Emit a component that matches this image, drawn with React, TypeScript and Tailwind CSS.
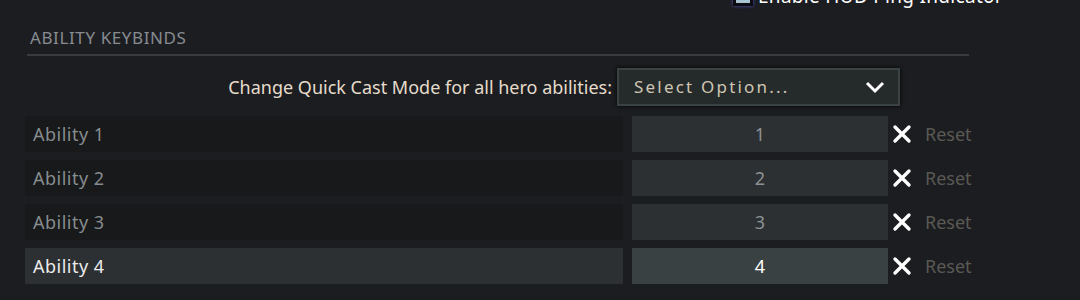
import React from 'react';

const abilities = [
  { name: 'Ability 1', key: '1' },
  { name: 'Ability 2', key: '2' },
  { name: 'Ability 3', key: '3' },
  { name: 'Ability 4', key: '4', active: true },
];

const XIcon = () => (
  <svg width="20" height="20" viewBox="0 0 20 20" className="shrink-0">
    <path d="M3 3 L17 17 M17 3 L3 17" stroke="#ffffff" strokeWidth="3.4" strokeLinecap="round" />
  </svg>
);

export default function App() {
  return (
    <div className="w-[1080px] h-[300px] overflow-hidden bg-[#1c1d21] font-['Noto_Sans',sans-serif]">
      {/* clipped checkbox row above */}
      <div className="flex items-center h-[24px] -mt-[16px] pl-[733px] gap-[5px]">
        <div className="w-[20px] h-[20px] border-[3px] border-[#0b0b10] bg-[#a9c4d2] shadow-[0_0_3px_#5050c0]" />
        <span className="text-[19px] text-white leading-none tracking-[0.3px]">Enable HUD Ping Indicator</span>
      </div>

      <div className="ml-[25px] w-[1000px]">
        <div className="ml-[2px] w-[942px] pt-[20px] pb-[6px] border-b-2 border-[#3a3b3f]">
          <div className="pl-[3px] text-[17px] leading-[20px] tracking-[0.6px] text-[#878c91] uppercase">Ability Keybinds</div>
        </div>

        <div className="flex items-center justify-end w-[875px] mt-[12px] h-[38px]">
          <span className="text-[18px] text-[#e6dccb] mr-[5px]">Change Quick Cast Mode for all hero abilities:</span>
          <div className="flex items-center justify-between w-[283px] h-[38px] bg-[#252a2a] border-2 border-[#3a4242] shadow-[0_0_4px_#000] pl-[15px] pr-[12px]">
            <span className="text-[17px] tracking-[2.2px] text-[#cfc6b5]">Select Option...</span>
            <svg width="22" height="14" viewBox="0 0 22 14">
              <path d="M3 3 L11 11 L19 3" stroke="#ffffff" strokeWidth="3" fill="none" strokeLinejoin="miter" />
            </svg>
          </div>
        </div>

        <div className="flex flex-col gap-[8px] mt-[10px]">
          {abilities.map((a) => (
            <div key={a.name} className="flex items-center h-[36px]">
              <div
                className={`w-[598px] shrink-0 h-full flex items-center pl-[8px] text-[18px] tracking-[0.5px] ${
                  a.active ? 'bg-[#2c3032] text-[#ececec]' : 'bg-[#17191a] text-[#878c8f]'
                }`}
              >
                {a.name}
              </div>
              <div
                className={`ml-[9px] w-[256px] shrink-0 h-full flex items-center justify-center text-[18px] ${
                  a.active ? 'bg-[#3a4142] text-white' : 'bg-[#2c3032] text-[#8c9294]'
                }`}
              >
                {a.key}
              </div>
              <div className="ml-[4px]">
                <XIcon />
              </div>
              <span className="ml-[13px] text-[18px] text-[#5a5953]">Reset</span>
            </div>
          ))}
        </div>
      </div>
    </div>
  );
}
